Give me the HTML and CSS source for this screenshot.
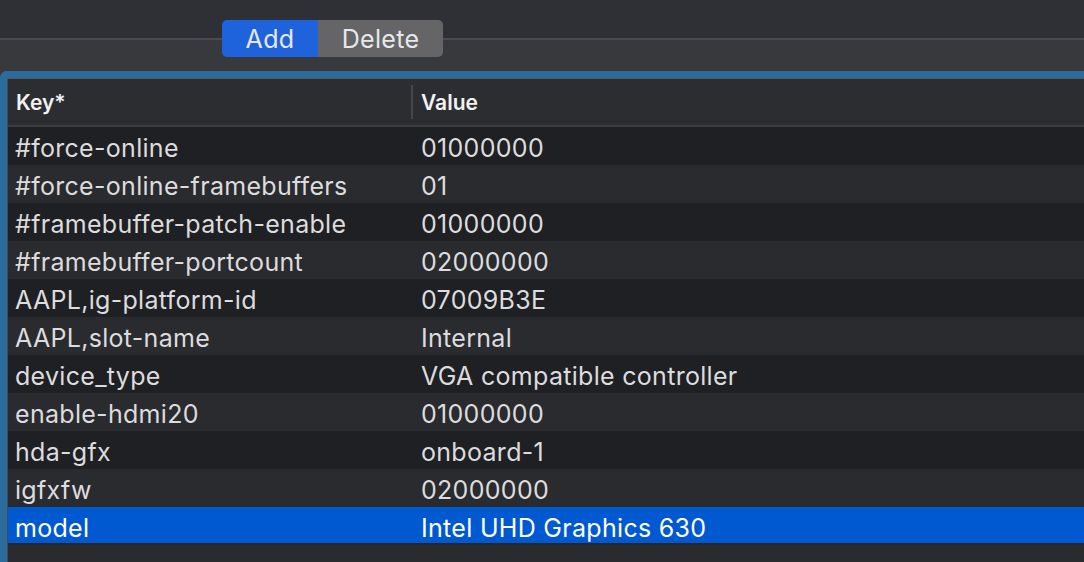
FILE: index.html
```html
<!DOCTYPE html>
<html>
<head>
<meta charset="utf-8">
<link rel="stylesheet" href="styles.css">
</head>
<body>
<div class="toolbar">
  <div class="seg">
    <span class="seg-btn seg-active">Add</span>
    <span class="seg-btn seg-off">Delete</span>
  </div>
</div>
<div class="panel">
  <div class="table">
    <div class="thead">
      <div class="th th-key">Key*</div>
      <div class="th th-val">Value</div>
    </div>
    <div class="row odd"><div class="cell key">#force-online</div><div class="cell val">01000000</div></div>
    <div class="row even"><div class="cell key">#force-online-framebuffers</div><div class="cell val">01</div></div>
    <div class="row odd"><div class="cell key">#framebuffer-patch-enable</div><div class="cell val">01000000</div></div>
    <div class="row even"><div class="cell key">#framebuffer-portcount</div><div class="cell val">02000000</div></div>
    <div class="row odd"><div class="cell key">AAPL,ig-platform-id</div><div class="cell val">07009B3E</div></div>
    <div class="row even"><div class="cell key">AAPL,slot-name</div><div class="cell val">Internal</div></div>
    <div class="row odd"><div class="cell key">device_type</div><div class="cell val">VGA compatible controller</div></div>
    <div class="row even"><div class="cell key">enable-hdmi20</div><div class="cell val">01000000</div></div>
    <div class="row odd"><div class="cell key">hda-gfx</div><div class="cell val">onboard-1</div></div>
    <div class="row even"><div class="cell key">igfxfw</div><div class="cell val">02000000</div></div>
    <div class="row selected"><div class="cell key">model</div><div class="cell val">Intel UHD Graphics 630</div></div>
    <div class="row even"><div class="cell key"></div><div class="cell val"></div></div>
  </div>
</div>
</body>
</html>
```

FILE: styles.css
```css
html, body {
  margin: 0;
  padding: 0;
  width: 1084px;
  height: 562px;
  overflow: hidden;
  background: #38393d;
  font-family: Inter, "Noto Sans", "Liberation Sans", sans-serif;
}

.toolbar {
  height: 71px;
  box-sizing: border-box;
  padding: 20px 0 0 222px;
  background: linear-gradient(to bottom, #2f3035 0, #2f3035 38px, #4b4c50 38px, #4b4c50 40px, #38393d 40px);
}

.seg {
  display: inline-flex;
  height: 37px;
  border-radius: 5px;
  overflow: hidden;
}

.seg-btn {
  display: flex;
  align-items: center;
  justify-content: center;
  font-size: 25px;
  color: #e8e8ea;
  letter-spacing: 0.3px;
  padding-top: 1px;
  box-sizing: border-box;
}

.seg-active {
  width: 96px;
  background: #1e63dc;
}

.seg-off {
  width: 125px;
  background: #656568;
}

.panel {
  width: 1110px;
  height: 500px;
  border-top: 7px solid #2a6d9d;
  border-left: 7px solid #2a6d9d;
  border-top-left-radius: 7px;
  background: #2a2b2e;
}

.table {
  border-top: 1px solid #56575b;
  border-left: 1px solid #4a4b4f;
}

.thead {
  display: flex;
  align-items: center;
  height: 46px;
  background: #2c2d31;
  border-bottom: 2px solid #3c3d41;
}

.th {
  font-size: 21px;
  font-weight: 600;
  color: #f2f2f2;
  box-sizing: border-box;
}

.th-key {
  width: 403px;
  padding-left: 8px;
}

.th-val {
  padding-left: 8px;
  border-left: 2px solid #46474b;
  height: 34px;
  display: flex;
  align-items: center;
}

.row {
  display: flex;
  align-items: center;
  height: 38px;
  box-sizing: border-box;
  padding-top: 4px;
  font-size: 25px;
  letter-spacing: 0.3px;
  color: #dcdcde;
}

.odd { background: #1f2023; }
.even { background: #2a2b2e; }

.selected {
  background: #0059d1;
  color: #ffffff;
  border-bottom: 2px solid #26272a;
  padding-top: 5px;
}

.cell {
  box-sizing: border-box;
  white-space: nowrap;
}

.key {
  width: 406px;
  padding-left: 7px;
}

.val {
  padding-left: 7px;
}
```
